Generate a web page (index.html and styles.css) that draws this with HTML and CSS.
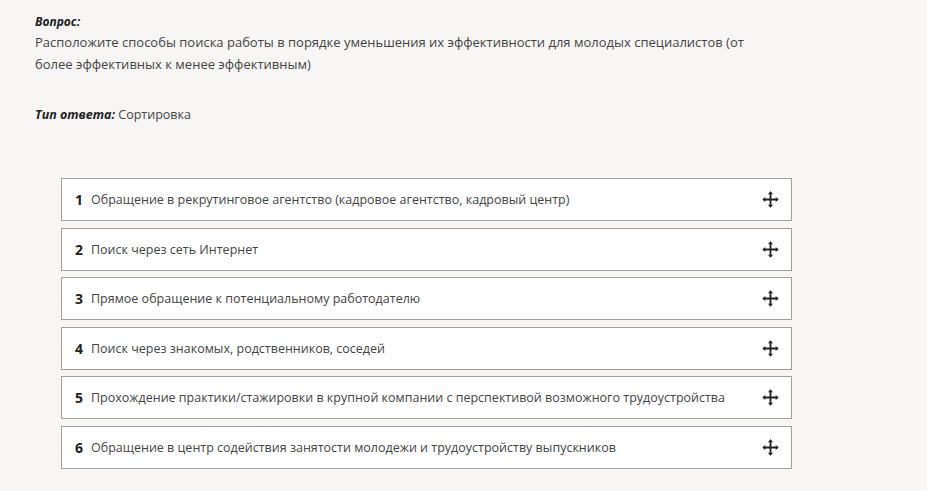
FILE: index.html
```html
<!DOCTYPE html>
<html lang="ru">
<head>
<meta charset="utf-8">
<link rel="stylesheet" href="styles.css">
</head>
<body>
<div class="page">
  <div class="question">
    <div class="label">Вопрос:</div>
    <div class="text">Расположите способы поиска работы в порядке уменьшения их эффективности для молодых специалистов (от более эффективных к менее эффективным)</div>
  </div>
  <div class="type"><span class="label">Тип ответа:</span> Сортировка</div>
  <ul class="list">
    <li class="item"><span class="num">1</span><span class="itext">Обращение в рекрутинговое агентство (кадровое агентство, кадровый центр)</span><svg class="move" viewBox="0 0 16 16"><path d="M8 1.5v13M1.5 8h13"/><path class="head" d="M8 0.3l-2.4 2.8h4.8zM8 15.7l-2.4-2.8h4.8zM0.3 8l2.8-2.4v4.8zM15.7 8l-2.8-2.4v4.8z"/></svg></li>
    <li class="item"><span class="num">2</span><span class="itext">Поиск через сеть Интернет</span><svg class="move" viewBox="0 0 16 16"><path d="M8 1.5v13M1.5 8h13"/><path class="head" d="M8 0.3l-2.4 2.8h4.8zM8 15.7l-2.4-2.8h4.8zM0.3 8l2.8-2.4v4.8zM15.7 8l-2.8-2.4v4.8z"/></svg></li>
    <li class="item"><span class="num">3</span><span class="itext">Прямое обращение к потенциальному работодателю</span><svg class="move" viewBox="0 0 16 16"><path d="M8 1.5v13M1.5 8h13"/><path class="head" d="M8 0.3l-2.4 2.8h4.8zM8 15.7l-2.4-2.8h4.8zM0.3 8l2.8-2.4v4.8zM15.7 8l-2.8-2.4v4.8z"/></svg></li>
    <li class="item"><span class="num">4</span><span class="itext">Поиск через знакомых, родственников, соседей</span><svg class="move" viewBox="0 0 16 16"><path d="M8 1.5v13M1.5 8h13"/><path class="head" d="M8 0.3l-2.4 2.8h4.8zM8 15.7l-2.4-2.8h4.8zM0.3 8l2.8-2.4v4.8zM15.7 8l-2.8-2.4v4.8z"/></svg></li>
    <li class="item"><span class="num">5</span><span class="itext">Прохождение практики/стажировки в крупной компании с перспективой возможного трудоустройства</span><svg class="move" viewBox="0 0 16 16"><path d="M8 1.5v13M1.5 8h13"/><path class="head" d="M8 0.3l-2.4 2.8h4.8zM8 15.7l-2.4-2.8h4.8zM0.3 8l2.8-2.4v4.8zM15.7 8l-2.8-2.4v4.8z"/></svg></li>
    <li class="item"><span class="num">6</span><span class="itext">Обращение в центр содействия занятости молодежи и трудоустройству выпускников</span><svg class="move" viewBox="0 0 16 16"><path d="M8 1.5v13M1.5 8h13"/><path class="head" d="M8 0.3l-2.4 2.8h4.8zM8 15.7l-2.4-2.8h4.8zM0.3 8l2.8-2.4v4.8zM15.7 8l-2.8-2.4v4.8z"/></svg></li>
  </ul>
</div>
</body>
</html>
```
FILE: styles.css
```css
html, body {
  margin: 0;
  padding: 0;
  background: #f7f6f5;
}
body {
  font-family: "Open Sans", "Noto Sans", sans-serif;
  color: #333;
}
.page {
  padding: 12px 0 0 35px;
  width: 745px;
}
.question .label {
  font-size: 12px;
  font-weight: 700;
  font-style: italic;
  color: #222;
  line-height: 19px;
}
.question .text {
  font-size: 13px;
  line-height: 22px;
  color: #444;
}
.type {
  margin-top: 31px;
  font-size: 12.5px;
  line-height: 18px;
  color: #444;
}
.type .label {
  font-weight: 700;
  font-style: italic;
  color: #222;
}
.list {
  list-style: none;
  margin: 54px 0 0 26px;
  padding: 0;
  width: 731px;
  display: flex;
  flex-direction: column;
  gap: 6.6px;
}
.item {
  box-sizing: border-box;
  height: 43px;
  background: #fff;
  border: 1px solid #a0a0a0;
  display: flex;
  align-items: center;
  padding: 0 12px 0 13px;
  font-size: 12.5px;
  color: #444;
}
.num {
  font-size: 14px;
  font-weight: 700;
  color: #222;
  width: 16px;
}
.itext {
  flex: 1;
}
.move {
  width: 17px;
  height: 17px;
}
.move path {
  stroke: #222;
  stroke-width: 1.7;
  fill: none;
}
.move path.head {
  stroke: none;
  fill: #222;
}
```
